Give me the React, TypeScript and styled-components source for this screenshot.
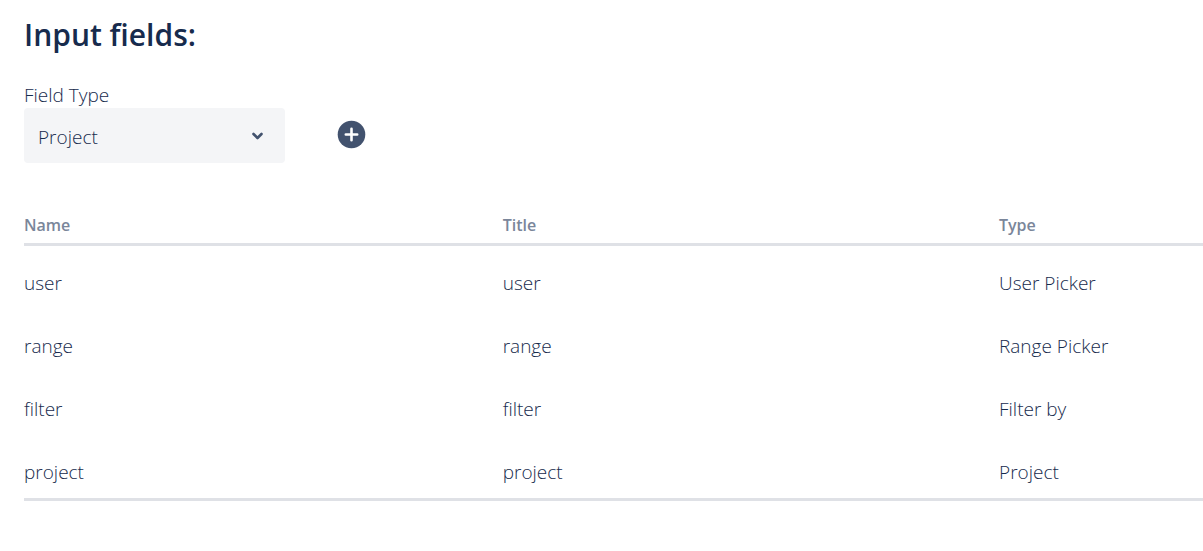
import React, { useState } from 'react';
import styled, { createGlobalStyle } from 'styled-components';

const GlobalStyle = createGlobalStyle`
  *, *::before, *::after { box-sizing: border-box; }
  body {
    margin: 0;
    background: #ffffff;
    color: #172b4d;
    font-family: "Segoe UI", "Open Sans", "Noto Sans", sans-serif;
    font-size: 19px;
    font-weight: 300;
    line-height: 26px;
  }
`;

const Page = styled.main`
  padding: 15px 0 24px 24px;
`;

const Heading = styled.h1`
  margin: 0;
  font-size: 30px;
  font-weight: 600;
  line-height: 40px;
`;

const Toolbar = styled.div`
  display: flex;
  align-items: flex-end;
  gap: 53px;
  margin-top: 27px;
`;

const Field = styled.div`
  display: flex;
  flex-direction: column;
  width: 261px;
`;

const Label = styled.label`
  display: block;
`;

const SelectBox = styled.div`
  display: grid;
  align-items: center;
  border-radius: 4px;
  background: #f4f5f7;

  > * { grid-area: 1 / 1; }
`;

const Select = styled.select`
  appearance: none;
  width: 100%;
  height: 55px;
  padding: 2px 48px 0 14px;
  border: 0;
  border-radius: 4px;
  background: transparent;
  color: inherit;
  font: inherit;
  cursor: pointer;
`;

const Chevron = styled.svg`
  justify-self: end;
  margin-right: 20px;
  pointer-events: none;
`;

const AddButton = styled.button`
  display: flex;
  margin-bottom: 14px;
  padding: 0;
  border: 0;
  border-radius: 50%;
  background: transparent;
  cursor: pointer;
`;

const Table = styled.table`
  width: 100%;
  margin-top: 45px;
  border-collapse: separate;
  border-spacing: 0;
  table-layout: fixed;
  border-bottom: 3px solid #dfe1e6;
`;

const HeaderCell = styled.th<{ $width: string }>`
  width: ${({ $width }) => $width};
  padding: 5px 0 6px;
  border-bottom: 3px solid #dfe1e6;
  color: #7a869a;
  font-size: 16px;
  font-weight: 600;
  line-height: 24px;
  text-align: left;
`;

const Cell = styled.td`
  padding: 24px 0 13px;
`;

const columns = [
  { title: 'Name', width: '40.6%' },
  { title: 'Title', width: '42.1%' },
  { title: 'Type', width: '17.3%' },
];

const rows = [
  { name: 'user', type: 'User Picker' },
  { name: 'range', type: 'Range Picker' },
  { name: 'filter', type: 'Filter by' },
  { name: 'project', type: 'Project' },
];

export default function App() {
  const [fieldType, setFieldType] = useState('Project');

  return (
    <>
      <GlobalStyle />
      <Page>
        <Heading>Input fields:</Heading>
        <Toolbar>
          <Field>
            <Label htmlFor="field-type">Field Type</Label>
            <SelectBox>
              <Select
                id="field-type"
                value={fieldType}
                onChange={(event) => setFieldType(event.target.value)}
              >
                {rows.map((row) => (
                  <option key={row.type}>{row.type}</option>
                ))}
              </Select>
              <Chevron width="14" height="10" viewBox="0 0 14 10" aria-hidden="true">
                <path
                  d="M2.5 3 6.5 7 10.5 3"
                  fill="none"
                  stroke="#42526e"
                  strokeWidth="2.6"
                  strokeLinecap="round"
                  strokeLinejoin="round"
                />
              </Chevron>
            </SelectBox>
          </Field>
          <AddButton type="button" aria-label="Add field">
            <svg width="28" height="28" viewBox="0 0 28 28" overflow="visible" aria-hidden="true">
              <circle cx="13.5" cy="13.5" r="13.8" fill="#42526e" />
              <path
                d="M13.5 7.8v11.4M7.8 13.5h11.4"
                stroke="#ffffff"
                strokeWidth="2.6"
                strokeLinecap="round"
              />
            </svg>
          </AddButton>
        </Toolbar>
        <Table>
          <thead>
            <tr>
              {columns.map((column) => (
                <HeaderCell key={column.title} scope="col" $width={column.width}>
                  {column.title}
                </HeaderCell>
              ))}
            </tr>
          </thead>
          <tbody>
            {rows.map((row) => (
              <tr key={row.name}>
                <Cell>{row.name}</Cell>
                <Cell>{row.name}</Cell>
                <Cell>{row.type}</Cell>
              </tr>
            ))}
          </tbody>
        </Table>
      </Page>
    </>
  );
}
